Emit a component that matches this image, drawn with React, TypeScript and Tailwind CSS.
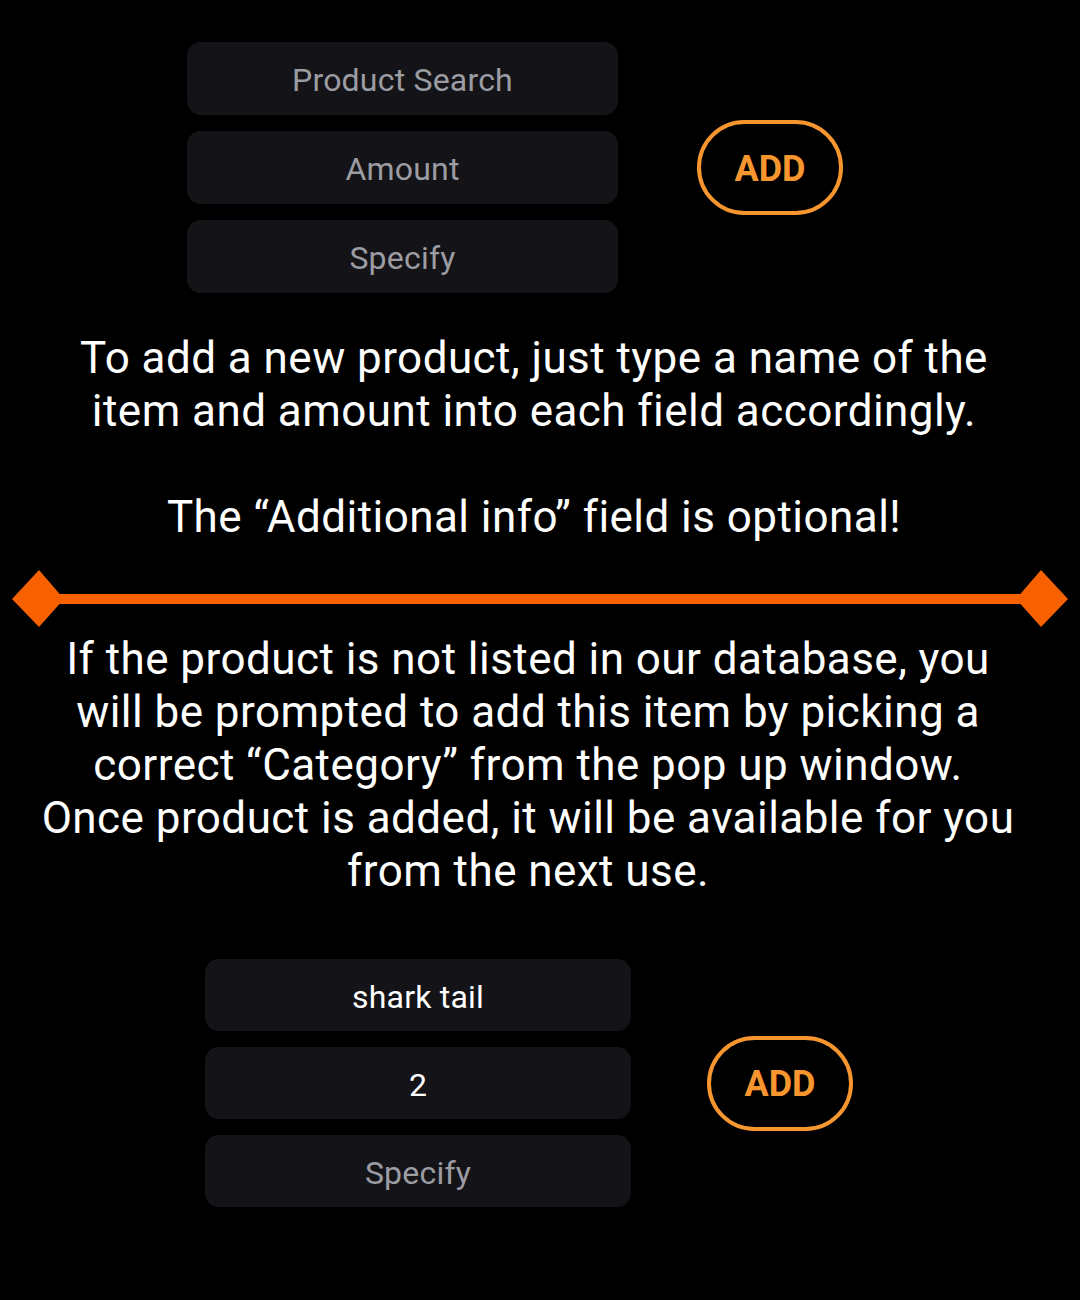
const font = { fontFamily: 'Roboto, "Noto Sans", sans-serif' };

function Field({ label, filled, tall }: { label: string; filled?: boolean; tall?: boolean }) {
  return (
    <div
      className={`flex items-center justify-center rounded-[14px] bg-[#141418] pt-[3px] text-[32px] tracking-[0.2px] ${
        tall ? 'h-[73px]' : 'h-[72px]'
      } ${filled ? 'text-white' : 'text-[#9c9ca3]'}`}
    >
      {label}
    </div>
  );
}

function AddButton({ className }: { className: string }) {
  return (
    <button
      className={`flex h-[95px] w-[146px] items-center justify-center rounded-full border-[4px] border-[#f7962f] pt-[2px] text-[36px] font-bold text-[#f7962f] ${className}`}
    >
      ADD
    </button>
  );
}

function Divider() {
  return (
    <svg width="1080" height="58" viewBox="0 0 1080 58" className="block">
      <rect x="50" y="24" width="980" height="10" fill="#f86100" />
      <polygon points="12,29 39,0 64,29 39,57" fill="#f86100" />
      <polygon points="1016,29 1041,0 1068,29 1041,57" fill="#f86100" />
    </svg>
  );
}

export default function App() {
  return (
    <div className="min-h-[1300px] w-[1080px] bg-black pt-[42px]" style={font}>
      {/* Empty form */}
      <div className="flex items-center">
        <div className="ml-[187px] flex w-[431px] flex-col gap-4">
          <Field label="Product Search" tall />
          <Field label="Amount" tall />
          <Field label="Specify" tall />
        </div>
        <AddButton className="ml-[79px]" />
      </div>

      <div className="mt-[39px] pr-[12px] text-center text-[44px] leading-[53px] tracking-[0.45px] text-white">
        <p>
          To add a new product, just type a name of the
          <br />
          item and amount into each field accordingly.
        </p>
        <p className="mt-[53px]">The “Additional info” field is optional!</p>
      </div>

      <div className="mt-[26px]">
        <Divider />
      </div>

      <p className="mt-[5px] pr-[24px] text-center text-[44px] leading-[53px] tracking-[0.45px] text-white">
        If the product is not listed in our database, you
        <br />
        will be prompted to add this item by picking a
        <br />
        correct “Category” from the pop up window.
        <br />
        Once product is added, it will be available for you
        <br />
        from the next use.
      </p>

      {/* Filled form */}
      <div className="mt-[61px] flex items-center">
        <div className="ml-[205px] flex w-[426px] flex-col gap-4">
          <Field label="shark tail" filled />
          <Field label="2" filled />
          <Field label="Specify" />
        </div>
        <AddButton className="ml-[76px]" />
      </div>
    </div>
  );
}
